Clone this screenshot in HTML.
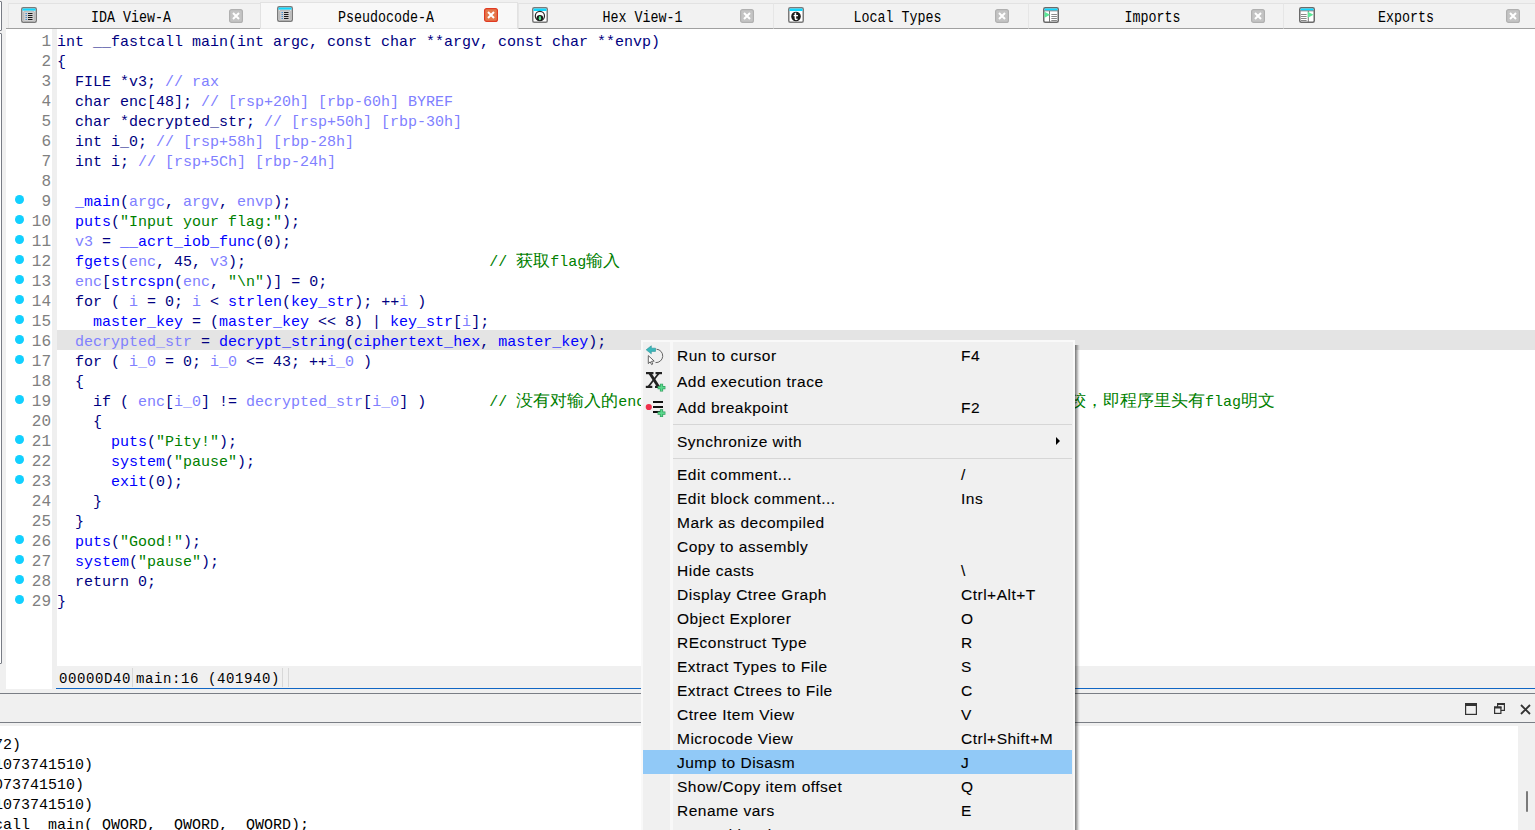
<!DOCTYPE html>
<html><head><meta charset="utf-8"><style>
*{margin:0;padding:0;box-sizing:border-box}
html,body{width:1535px;height:830px;overflow:hidden;background:#f0f0f0;position:relative;font-family:"Liberation Sans",sans-serif}
.abs{position:absolute}
.lf{position:absolute;left:-3px;width:5px;border:1.5px solid #787c85;background:#fff;border-radius:1px}
.tab{position:absolute;top:3px;height:26px;background:#f2f2f2;border-top:1px solid #e2e2e2;border-left:1px solid #e6e6e6;border-bottom:1px solid #a0a0a0}
.tab.act{top:2px;height:27px;background:#f8f8f8;border-bottom:1px solid #e8e8e8;border-left:1px solid #e2e2e2;border-right:1px solid #e2e2e2;z-index:2}
.ti{position:absolute;top:7px;z-index:3}
.tc{position:absolute;top:8.5px;z-index:3}
.tl{position:absolute;top:8px;height:20px;line-height:20px;text-align:center;font-family:"Liberation Mono",monospace;font-size:13.34px;color:#000;z-index:3;white-space:pre;transform:scaleY(1.2)}
#gutter{position:absolute;left:6px;top:29px;width:46px;height:660px;background:#fff}
#gstrip{position:absolute;left:52px;top:29px;width:5px;height:660px;background:#efefef}
#gutter div{position:relative;height:20px}
#gutter span{position:absolute;right:1px;top:2.5px;line-height:20px;font-family:"Liberation Mono",monospace;font-size:16px;color:#808080}
#gutter u{position:absolute;left:8.8px;top:6.3px;width:8.8px;height:8.8px;border-radius:50%;background:#12d0ff}
#codebg{position:absolute;left:57px;top:29px;width:1478px;height:637px;background:#fff}
#code{position:absolute;left:57px;top:30px;width:1478px;font-family:"Liberation Mono",monospace;font-size:15px;white-space:pre}
#code div{height:20px;line-height:20px}
#code div.hl{background:#e4e4e4}
#code b{font-weight:normal;position:relative;top:3px}
#code i,#c2 i{font-style:normal;display:inline-block;width:17px;height:20px;overflow:hidden;vertical-align:top;font-size:17px;line-height:18px;text-align:left}
.k{color:#000080} .f{color:#0000ff} .v{color:#8080ff} .s{color:#008000} .c{color:#008000} .a{color:#8080ff}
#status{position:absolute;left:56px;top:666px;width:1479px;height:23px;background:#f0f0f0;border-bottom:1px solid #1166c4;font-family:"Liberation Mono",monospace;font-size:14px;letter-spacing:0.6px;color:#000;white-space:pre}
#status span{position:absolute;top:3.5px;line-height:18px}
.vsep{position:absolute;top:2px;width:1px;height:19px;background:#d8d8d8}
#hline1{position:absolute;left:0;top:693px;width:1535px;height:1px;background:#7a7e85}
#hline2{position:absolute;left:0;top:722px;width:1535px;height:1px;background:#7a7e85}
#outbg{position:absolute;left:0;top:726px;width:1518px;height:104px;background:#fff}
#out div{position:absolute;left:-6px;height:20px;line-height:20px;padding-top:4px;font-family:"Liberation Mono",monospace;font-size:15px;color:#000;white-space:pre}
#menu{position:absolute;left:641px;top:340px;width:434px;height:500px;background:#f0f0f0;border:2px solid #f9f9f9;border-bottom:none}
#mcol{position:absolute;left:670px;top:342px;width:3px;height:488px;background:#f8f8f8}
.mi{position:absolute;left:643px;width:429px;font-size:15.5px;letter-spacing:0.5px;-webkit-text-stroke:0.1px #000;color:#000;white-space:pre}
.mi.sel{background:#91c9f7}
.mt{position:absolute;left:34px;top:1px}
.ms{position:absolute;left:318px;top:1px}
.arr{position:absolute;left:413px;top:9px;width:0;height:0;border-left:4px solid #000;border-top:4px solid transparent;border-bottom:4px solid transparent}
.msep{position:absolute;left:673px;width:399px;height:1px;background:#d6d6d6}
</style></head><body>
<div class="lf" style="top:1px;height:30px"></div>
<div class="lf" style="top:33px;height:631px"></div>
<div class="tab" style="left:8px;width:252px"></div><div class="tab act" style="left:260px;width:258px"></div><div class="tab" style="left:518px;width:255px"></div><div class="tab" style="left:773px;width:255px"></div><div class="tab" style="left:1028px;width:255px"></div><div class="tab" style="left:1283px;width:252px"></div><svg class="ti" style="left:21px;top:7px" width="16" height="16" viewBox="0 0 16 16"><rect x="0.75" y="0.75" width="14.5" height="14.5" rx="1.5" fill="#fff" stroke="#7a7a7a" stroke-width="1.5"/><rect x="1.5" y="1.5" width="13" height="2.2" fill="#10d8ff"/><rect x="2.6" y="4.2" width="10.8" height="10.3" rx="1" fill="#d0d0d0" stroke="#a8a8a8" stroke-width="0.8"/><g fill="#2a80d0"><rect x="4.6" y="6" width="1.2" height="1"/><rect x="4.6" y="8" width="1.2" height="1"/><rect x="4.6" y="10" width="1.2" height="1"/><rect x="4.6" y="12" width="1.2" height="1"/></g><g fill="#1a1a1a"><rect x="7" y="6" width="4.5" height="1"/><rect x="7" y="8" width="4.5" height="1"/><rect x="7" y="10" width="4.5" height="1"/><rect x="7" y="12" width="4.5" height="1"/></g></svg><svg class="tc" style="left:229px" width="14" height="14" viewBox="0 0 14 14"><rect x="0.6" y="0.6" width="12.8" height="12.8" rx="2" fill="#c4c4c4" stroke="#b0b0b0" stroke-width="1.2"/><path d="M4 4 L10 10 M10 4 L4 10" stroke="#fff" stroke-width="2"/></svg><div class="tl" style="left:65px;width:132px">IDA View-A</div><svg class="ti" style="left:277px;top:6px" width="16" height="16" viewBox="0 0 16 16"><rect x="0.75" y="0.75" width="14.5" height="14.5" rx="1.5" fill="#fff" stroke="#7a7a7a" stroke-width="1.5"/><rect x="1.5" y="1.5" width="13" height="2.2" fill="#10d8ff"/><rect x="2.6" y="4.2" width="10.8" height="10.3" rx="1" fill="#d0d0d0" stroke="#a8a8a8" stroke-width="0.8"/><g fill="#2a80d0"><rect x="4.6" y="6" width="1.2" height="1"/><rect x="4.6" y="8" width="1.2" height="1"/><rect x="4.6" y="10" width="1.2" height="1"/><rect x="4.6" y="12" width="1.2" height="1"/></g><g fill="#1a1a1a"><rect x="7" y="6" width="4.5" height="1"/><rect x="7" y="8" width="4.5" height="1"/><rect x="7" y="10" width="4.5" height="1"/><rect x="7" y="12" width="4.5" height="1"/></g></svg><svg class="tc" style="left:484px;top:7.5px" width="14" height="14" viewBox="0 0 14 14"><rect x="0.6" y="0.6" width="12.8" height="12.8" rx="2" fill="#e4784c" stroke="#e03a22" stroke-width="1.2"/><path d="M4 4 L10 10 M10 4 L4 10" stroke="#fff" stroke-width="2"/></svg><div class="tl" style="left:317px;width:138px">Pseudocode-A</div><svg class="ti" style="left:532px" width="16" height="16" viewBox="0 0 16 16"><rect x="0.75" y="0.75" width="14.5" height="14.5" rx="1.5" fill="#fff" stroke="#7a7a7a" stroke-width="1.5"/><rect x="1.5" y="1.5" width="13" height="2.5" fill="#10d8ff"/><circle cx="7.9" cy="9" r="4.6" fill="none" stroke="#2a2a2a" stroke-width="1.2"/><ellipse cx="7.9" cy="10.8" rx="3.3" ry="2.9" fill="#1a1a1a"/><ellipse cx="7.9" cy="11.2" rx="1.2" ry="2.1" fill="#50e890"/></svg><svg class="tc" style="left:740px" width="14" height="14" viewBox="0 0 14 14"><rect x="0.6" y="0.6" width="12.8" height="12.8" rx="2" fill="#c4c4c4" stroke="#b0b0b0" stroke-width="1.2"/><path d="M4 4 L10 10 M10 4 L4 10" stroke="#fff" stroke-width="2"/></svg><div class="tl" style="left:575px;width:135px">Hex View-1</div><svg class="ti" style="left:788px" width="16" height="16" viewBox="0 0 16 16"><rect x="0.75" y="0.75" width="14.5" height="14.5" rx="1.5" fill="#fff" stroke="#7a7a7a" stroke-width="1.5"/><rect x="1.5" y="1.5" width="13" height="2.5" fill="#10d8ff"/><circle cx="8" cy="9.5" r="4.8" fill="#1a1a1a"/><path d="M6.6 6 L8.2 5.6 L8.2 11.2 Q8.2 12.2 9.6 11.6 L9.6 12.8 Q6.6 14 6.6 11.4 Z M5.6 8 L10 8 L10 9.3 L5.6 9.3 Z" fill="#fff"/></svg><svg class="tc" style="left:995px" width="14" height="14" viewBox="0 0 14 14"><rect x="0.6" y="0.6" width="12.8" height="12.8" rx="2" fill="#c4c4c4" stroke="#b0b0b0" stroke-width="1.2"/><path d="M4 4 L10 10 M10 4 L4 10" stroke="#fff" stroke-width="2"/></svg><div class="tl" style="left:830px;width:135px">Local Types</div><svg class="ti" style="left:1043px" width="16" height="16" viewBox="0 0 16 16"><rect x="0.75" y="0.75" width="14.5" height="14.5" rx="1.5" fill="#fff" stroke="#6a6a6a" stroke-width="1.5"/><rect x="1.5" y="1.5" width="13" height="2.2" fill="#10d8ff"/><rect x="1" y="3.5" width="14" height="0.8" fill="#777"/><rect x="6" y="4" width="1" height="11" fill="#777"/><path d="M1.5 4.7 L7.2 7.7 L1.5 10.7 Z" fill="#5ce898"/><g fill="#888"><rect x="8.3" y="7" width="5.6" height="1"/><rect x="8.3" y="9" width="5.6" height="1"/><rect x="8.3" y="11" width="5.6" height="1"/><rect x="8.3" y="13" width="5.6" height="1"/></g></svg><svg class="tc" style="left:1251px" width="14" height="14" viewBox="0 0 14 14"><rect x="0.6" y="0.6" width="12.8" height="12.8" rx="2" fill="#c4c4c4" stroke="#b0b0b0" stroke-width="1.2"/><path d="M4 4 L10 10 M10 4 L4 10" stroke="#fff" stroke-width="2"/></svg><div class="tl" style="left:1085px;width:135px">Imports</div><svg class="ti" style="left:1299px" width="16" height="16" viewBox="0 0 16 16"><rect x="0.75" y="0.75" width="14.5" height="14.5" rx="1.5" fill="#fff" stroke="#6a6a6a" stroke-width="1.5"/><rect x="1.5" y="1.5" width="13" height="2.2" fill="#10d8ff"/><rect x="1" y="3.5" width="14" height="0.8" fill="#777"/><rect x="8.8" y="4" width="1" height="11" fill="#777"/><path d="M8.8 4.7 L14.5 7.7 L8.8 10.7 Z" fill="#5ce898"/><g fill="#888"><rect x="2" y="7" width="5.6" height="1"/><rect x="2" y="9" width="5.6" height="1"/><rect x="2" y="11" width="5.6" height="1"/><rect x="2" y="13" width="5.6" height="1"/></g></svg><svg class="tc" style="left:1506px" width="14" height="14" viewBox="0 0 14 14"><rect x="0.6" y="0.6" width="12.8" height="12.8" rx="2" fill="#c4c4c4" stroke="#b0b0b0" stroke-width="1.2"/><path d="M4 4 L10 10 M10 4 L4 10" stroke="#fff" stroke-width="2"/></svg><div class="tl" style="left:1340px;width:132px">Exports</div>
<div class="abs" style="left:6px;top:28px;width:3px;height:1px;background:#a0a0a0"></div>
<div id="gutter">
<div><span>1</span></div>
<div><span>2</span></div>
<div><span>3</span></div>
<div><span>4</span></div>
<div><span>5</span></div>
<div><span>6</span></div>
<div><span>7</span></div>
<div><span>8</span></div>
<div><u></u><span>9</span></div>
<div><u></u><span>10</span></div>
<div><u></u><span>11</span></div>
<div><u></u><span>12</span></div>
<div><u></u><span>13</span></div>
<div><u></u><span>14</span></div>
<div><u></u><span>15</span></div>
<div><u></u><span>16</span></div>
<div><u></u><span>17</span></div>
<div><span>18</span></div>
<div><u></u><span>19</span></div>
<div><span>20</span></div>
<div><u></u><span>21</span></div>
<div><u></u><span>22</span></div>
<div><u></u><span>23</span></div>
<div><span>24</span></div>
<div><span>25</span></div>
<div><u></u><span>26</span></div>
<div><u></u><span>27</span></div>
<div><u></u><span>28</span></div>
<div><u></u><span>29</span></div>
</div>
<div id="gstrip"></div>
<div id="codebg"></div>
<div id="code"><div><b class="k">int __fastcall main(int argc, const char **argv, const char **envp)</b></div><div><b class="k">{</b></div><div><b class="k">  FILE *v3; </b><b class="a">// rax</b></div><div><b class="k">  char enc[48]; </b><b class="a">// [rsp+20h] [rbp-60h] BYREF</b></div><div><b class="k">  char *decrypted_str; </b><b class="a">// [rsp+50h] [rbp-30h]</b></div><div><b class="k">  int i_0; </b><b class="a">// [rsp+58h] [rbp-28h]</b></div><div><b class="k">  int i; </b><b class="a">// [rsp+5Ch] [rbp-24h]</b></div><div></div><div><b class="k">  </b><b class="f">_main</b><b class="k">(</b><b class="v">argc</b><b class="k">, </b><b class="v">argv</b><b class="k">, </b><b class="v">envp</b><b class="k">);</b></div><div><b class="k">  </b><b class="f">puts</b><b class="k">(</b><b class="s">&quot;Input your flag:&quot;</b><b class="k">);</b></div><div><b class="k">  </b><b class="v">v3</b><b class="k"> = </b><b class="f">__acrt_iob_func</b><b class="k">(0);</b></div><div><b class="k">  </b><b class="f">fgets</b><b class="k">(</b><b class="v">enc</b><b class="k">, 45, </b><b class="v">v3</b><b class="k">);                           </b><b class="c">// <i>获</i><i>取</i>flag<i>输</i><i>入</i></b></div><div><b class="k">  </b><b class="v">enc</b><b class="k">[</b><b class="f">strcspn</b><b class="k">(</b><b class="v">enc</b><b class="k">, </b><b class="s">&quot;\n&quot;</b><b class="k">)] = 0;</b></div><div><b class="k">  for ( </b><b class="v">i</b><b class="k"> = 0; </b><b class="v">i</b><b class="k"> &lt; </b><b class="f">strlen</b><b class="k">(</b><b class="f">key_str</b><b class="k">); ++</b><b class="v">i</b><b class="k"> )</b></div><div><b class="k">    </b><b class="f">master_key</b><b class="k"> = (</b><b class="f">master_key</b><b class="k"> &lt;&lt; 8) | </b><b class="f">key_str</b><b class="k">[</b><b class="v">i</b><b class="k">];</b></div><div class="hl"><b class="k">  </b><b class="v">decrypted_str</b><b class="k"> = </b><b class="f">decrypt_string</b><b class="k">(</b><b class="f">ciphertext_hex</b><b class="k">, </b><b class="f">master_key</b><b class="k">);</b></div><div><b class="k">  for ( </b><b class="v">i_0</b><b class="k"> = 0; </b><b class="v">i_0</b><b class="k"> &lt;= 43; ++</b><b class="v">i_0</b><b class="k"> )</b></div><div><b class="k">  {</b></div><div><b class="k">    if ( </b><b class="v">enc</b><b class="k">[</b><b class="v">i_0</b><b class="k">] != </b><b class="v">decrypted_str</b><b class="k">[</b><b class="v">i_0</b><b class="k">] )       </b><b class="c">// <i>没</i><i>有</i><i>对</i><i>输</i><i>入</i><i>的</i>enc<i>进</i><i>行</i><i>加</i><i>密</i></b></div><div><b class="k">    {</b></div><div><b class="k">      </b><b class="f">puts</b><b class="k">(</b><b class="s">&quot;Pity!&quot;</b><b class="k">);</b></div><div><b class="k">      </b><b class="f">system</b><b class="k">(</b><b class="s">&quot;pause&quot;</b><b class="k">);</b></div><div><b class="k">      </b><b class="f">exit</b><b class="k">(0);</b></div><div><b class="k">    }</b></div><div><b class="k">  }</b></div><div><b class="k">  </b><b class="f">puts</b><b class="k">(</b><b class="s">&quot;Good!&quot;</b><b class="k">);</b></div><div><b class="k">  </b><b class="f">system</b><b class="k">(</b><b class="s">&quot;pause&quot;</b><b class="k">);</b></div><div><b class="k">  return 0;</b></div><div><b class="k">}</b></div></div>
<div id="c2" class="abs" style="left:1069px;top:393px;height:20px;line-height:20px;font-family:'Liberation Mono',monospace;font-size:15px;white-space:pre;color:#008000"><i>较</i><i>，</i><i>即</i><i>程</i><i>序</i><i>里</i><i>头</i><i>有</i>flag<i>明</i><i>文</i></div>
<div id="status"><span style="left:3px">00000D40</span><div class="vsep" style="left:76px"></div><span style="left:80px">main:16 (401940)</span><div class="vsep" style="left:226px"></div><div class="vsep" style="left:232px"></div></div>
<div id="hline1"></div>
<div id="hline2"></div>
<svg class="abs" style="left:1465px;top:703px" width="12" height="12" viewBox="0 0 12 12"><rect x="0.6" y="0.6" width="10.8" height="10.8" fill="none" stroke="#333" stroke-width="1.2"/><rect x="0" y="0" width="12" height="3" fill="#333"/></svg>
<svg class="abs" style="left:1494px;top:703px" width="11" height="11" viewBox="0 0 11 11"><rect x="3.6" y="0.6" width="6.8" height="6.8" fill="none" stroke="#333" stroke-width="1.2"/><rect x="3" y="0" width="8" height="2" fill="#333"/><rect x="0.6" y="4.1" width="6.3" height="6.3" fill="#f0f0f0" stroke="#333" stroke-width="1.2"/><rect x="0" y="3.5" width="7.5" height="2" fill="#333"/></svg>
<svg class="abs" style="left:1520px;top:704px" width="11" height="11" viewBox="0 0 11 11"><path d="M1 1 L10 10 M10 1 L1 10" stroke="#333" stroke-width="1.8"/></svg>
<div id="outbg"></div>
<div id="out"><div style="top:732px">72)</div><div style="top:752px">1073741510)</div><div style="top:772px">073741510)</div><div style="top:792px">1073741510)</div><div style="top:812px">call  main( QWORD,  QWORD,  QWORD);</div></div>
<div class="abs" style="left:1518px;top:725px;width:17px;height:105px;background:#f0f0f0"></div>
<div class="abs" style="left:1526px;top:791px;width:2px;height:21px;background:#7a7a7a;border-radius:1px"></div>
<div id="menu"></div>
<div id="mcol"></div><div class="abs" style="left:1075px;top:345px;width:5px;height:490px;background:linear-gradient(to right,rgba(0,0,0,0.52),rgba(0,0,0,0.3) 40%,rgba(0,0,0,0.08) 75%,rgba(0,0,0,0))"></div>
<div class="mi" style="top:342px;height:26px;line-height:26px"><span class="mt">Run to cursor</span><span class="ms">F4</span></div><div class="mi" style="top:368px;height:26px;line-height:26px"><span class="mt">Add execution trace</span></div><div class="mi" style="top:394px;height:26px;line-height:26px"><span class="mt">Add breakpoint</span><span class="ms">F2</span></div><div class="msep" style="top:424px"></div><div class="mi" style="top:428px;height:26px;line-height:26px"><span class="mt">Synchronize with</span><span class="arr"></span></div><div class="msep" style="top:458px"></div><div class="mi" style="top:462px;height:24px;line-height:24px"><span class="mt">Edit comment...</span><span class="ms">/</span></div><div class="mi" style="top:486px;height:24px;line-height:24px"><span class="mt">Edit block comment...</span><span class="ms">Ins</span></div><div class="mi" style="top:510px;height:24px;line-height:24px"><span class="mt">Mark as decompiled</span></div><div class="mi" style="top:534px;height:24px;line-height:24px"><span class="mt">Copy to assembly</span></div><div class="mi" style="top:558px;height:24px;line-height:24px"><span class="mt">Hide casts</span><span class="ms">\</span></div><div class="mi" style="top:582px;height:24px;line-height:24px"><span class="mt">Display Ctree Graph</span><span class="ms">Ctrl+Alt+T</span></div><div class="mi" style="top:606px;height:24px;line-height:24px"><span class="mt">Object Explorer</span><span class="ms">O</span></div><div class="mi" style="top:630px;height:24px;line-height:24px"><span class="mt">REconstruct Type</span><span class="ms">R</span></div><div class="mi" style="top:654px;height:24px;line-height:24px"><span class="mt">Extract Types to File</span><span class="ms">S</span></div><div class="mi" style="top:678px;height:24px;line-height:24px"><span class="mt">Extract Ctrees to File</span><span class="ms">C</span></div><div class="mi" style="top:702px;height:24px;line-height:24px"><span class="mt">Ctree Item View</span><span class="ms">V</span></div><div class="mi" style="top:726px;height:24px;line-height:24px"><span class="mt">Microcode View</span><span class="ms">Ctrl+Shift+M</span></div><div class="mi sel" style="top:750px;height:24px;line-height:24px"><span class="mt">Jump to Disasm</span><span class="ms">J</span></div><div class="mi" style="top:774px;height:24px;line-height:24px"><span class="mt">Show/Copy item offset</span><span class="ms">Q</span></div><div class="mi" style="top:798px;height:24px;line-height:24px"><span class="mt">Rename vars</span><span class="ms">E</span></div><div class="mi" style="top:822px;height:24px;line-height:24px"><span class="mt">Expand local types</span></div>

<svg style="position:absolute;left:640px;top:342px" width="32" height="80" viewBox="640 342 32 80">
 <path d="M656.5 349.2 A6.3 6.3 0 1 1 655.5 362.6" fill="none" stroke="#666" stroke-width="1"/>
 <path d="M646.2 349.8 L651.3 345.8 L651.3 348.2 L655.5 348.2 L655.5 351.4 L651.3 351.4 L651.3 353.8 Z" fill="#3ab8bc" stroke="#2a9296" stroke-width="0.6"/>
 <path d="M648.3 355.6 L648.3 363.6 L650.2 361.8 L651.6 364.6 L652.8 364 L651.5 361.3 L654.2 361.1 Z" fill="#fff" stroke="#555" stroke-width="0.9" stroke-linejoin="round"/>
 <g fill="#222">
  <path d="M648.2 373.2 L651.6 373.2 L660.2 386.8 L656.8 386.8 Z"/>
  <path d="M657.8 373.2 L660 373.2 L649.4 386.8 L647.2 386.8 Z"/>
  <rect x="646" y="372" width="7.5" height="2.2"/>
  <rect x="655.5" y="372" width="6.5" height="2.2"/>
  <rect x="645.8" y="385.8" width="6.5" height="2.2"/>
  <rect x="655" y="385.8" width="7" height="2.2"/>
 </g>
 <path d="M657.6 387.6 h7.8 M661.5 383.7 v7.8" stroke="#2e9a5a" stroke-width="3.2"/>
 <path d="M658.2 387.6 h6.6 M661.5 384.3 v6.6" stroke="#5ad88c" stroke-width="1.8"/>
 <circle cx="648.8" cy="407" r="3.1" fill="#f0304c"/>
 <path d="M653 402 h10 M653 407 h10 M653 412 h7" stroke="#111" stroke-width="2"/>
 <path d="M657.6 413.2 h7.8 M661.5 409.3 v7.8" stroke="#2e9a5a" stroke-width="3.2"/>
 <path d="M658.2 413.2 h6.6 M661.5 409.9 v6.6" stroke="#5ad88c" stroke-width="1.8"/>
</svg>

</body></html>
